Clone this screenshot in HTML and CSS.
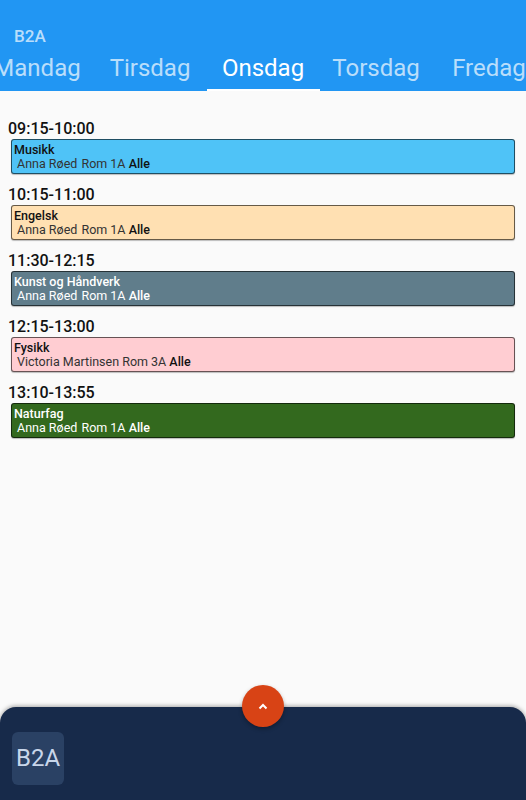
FILE: index.html
```html
<!DOCTYPE html>
<html>
<head>
    <meta charset="utf-8">
    <title>B2A Timeplan</title>
    <link rel="stylesheet" href="styles.css">
</head>
<body>
    <header class="app-bar">
        <div class="app-title">B2A</div>
        <nav class="tabs">
            <div class="tab">Mandag</div>
            <div class="tab">Tirsdag</div>
            <div class="tab active">Onsdag</div>
            <div class="tab">Torsdag</div>
            <div class="tab">Fredag</div>
        </nav>
    </header>

    <main class="schedule">
        <section class="lesson">
            <h2 class="lesson-time">09:15-10:00</h2>
            <div class="lesson-card musikk">
                <div class="lesson-subject">Musikk</div>
                <div class="lesson-info">Anna Røed <span>Rom 1A</span> <b>Alle</b></div>
            </div>
        </section>

        <section class="lesson">
            <h2 class="lesson-time">10:15-11:00</h2>
            <div class="lesson-card engelsk">
                <div class="lesson-subject">Engelsk</div>
                <div class="lesson-info">Anna Røed <span>Rom 1A</span> <b>Alle</b></div>
            </div>
        </section>

        <section class="lesson">
            <h2 class="lesson-time">11:30-12:15</h2>
            <div class="lesson-card kunst dark">
                <div class="lesson-subject">Kunst og Håndverk</div>
                <div class="lesson-info">Anna Røed <span>Rom 1A</span> <b>Alle</b></div>
            </div>
        </section>

        <section class="lesson">
            <h2 class="lesson-time">12:15-13:00</h2>
            <div class="lesson-card fysikk">
                <div class="lesson-subject">Fysikk</div>
                <div class="lesson-info">Victoria Martinsen Rom 3A <b>Alle</b></div>
            </div>
        </section>

        <section class="lesson">
            <h2 class="lesson-time">13:10-13:55</h2>
            <div class="lesson-card naturfag dark">
                <div class="lesson-subject">Naturfag</div>
                <div class="lesson-info">Anna Røed <span>Rom 1A</span> <b>Alle</b></div>
            </div>
        </section>
    </main>

    <footer class="bottom-bar">
        <button class="fab" type="button">
            <svg width="10" height="7" viewBox="0 0 10 7">
                <polyline points="1.5,5.5 5,2 8.5,5.5" fill="none" stroke="#fff" stroke-width="2"/>
            </svg>
        </button>
        <div class="class-badge">B2A</div>
    </footer>
</body>
</html>
```

FILE: styles.css
```css
body {
    margin: 0;
    font-family: Roboto, 'Noto Sans', sans-serif;
    background-color: #fafafa;
    color: #111;
}

.app-bar {
    background-color: #2196f3;
    padding-top: 26px;
    overflow: hidden;
}

.app-title {
    font-size: 17px;
    font-weight: 500;
    line-height: 20px;
    padding-left: 14px;
    color: rgba(255, 255, 255, 0.7);
}

.tabs {
    display: flex;
    justify-content: center;
}

.tab {
    flex: 0 0 113px;
    text-align: center;
    font-size: 24px;
    line-height: 30px;
    padding: 7px 0 6px;
    border-bottom: 2px solid transparent;
    color: rgba(255, 255, 255, 0.7);
    white-space: nowrap;
}

.tab.active {
    color: #fff;
    border-bottom-color: #fff;
}

.schedule {
    padding: 28px 11px 0 8px;
}

.lesson {
    margin-bottom: 11px;
}

.lesson-time {
    margin: 0;
    font-size: 16px;
    font-weight: 500;
    line-height: 20px;
    color: #111;
}

.lesson-card {
    margin-left: 3px;
    padding: 3px 4px 3px 2px;
    border: 1px solid rgba(0, 0, 0, 0.6);
    border-radius: 3px;
    box-shadow: 0 1px 1px rgba(0, 0, 0, 0.25);
    font-size: 12.5px;
    line-height: 13.5px;
}

.lesson-subject {
    font-weight: 500;
    color: #111;
}

.lesson-info {
    padding-left: 3px;
    color: #333;
}

.lesson-info span {
    margin-left: 1px;
}

.lesson-info b {
    font-weight: 500;
    color: #111;
}

.lesson-card.dark .lesson-subject,
.lesson-card.dark .lesson-info,
.lesson-card.dark .lesson-info b {
    color: #fff;
}

.musikk { background-color: #4fc3f7; }
.engelsk { background-color: #ffe0b2; }
.kunst { background-color: #607d8b; }
.fysikk { background-color: #ffcdd2; }
.naturfag { background-color: #33691e; }

.bottom-bar {
    position: fixed;
    left: 0;
    right: 0;
    bottom: 0;
    height: 93px;
    box-sizing: border-box;
    padding: 25px 0 0 12px;
    background-color: #172a4a;
    border-radius: 16px 16px 0 0;
    box-shadow: 0 -1px 4px rgba(0, 0, 0, 0.35);
}

.class-badge {
    width: 52px;
    height: 53px;
    border-radius: 6px;
    background-color: #2a4164;
    color: #c8d6ea;
    font-size: 24px;
    line-height: 53px;
    text-align: center;
}

.fab {
    position: absolute;
    top: -22px;
    left: 242px;
    width: 42px;
    height: 42px;
    padding: 0;
    border: none;
    border-radius: 50%;
    background-color: #d84315;
    box-shadow: 0 2px 4px rgba(0, 0, 0, 0.3);
    display: flex;
    align-items: center;
    justify-content: center;
    cursor: pointer;
}
```
